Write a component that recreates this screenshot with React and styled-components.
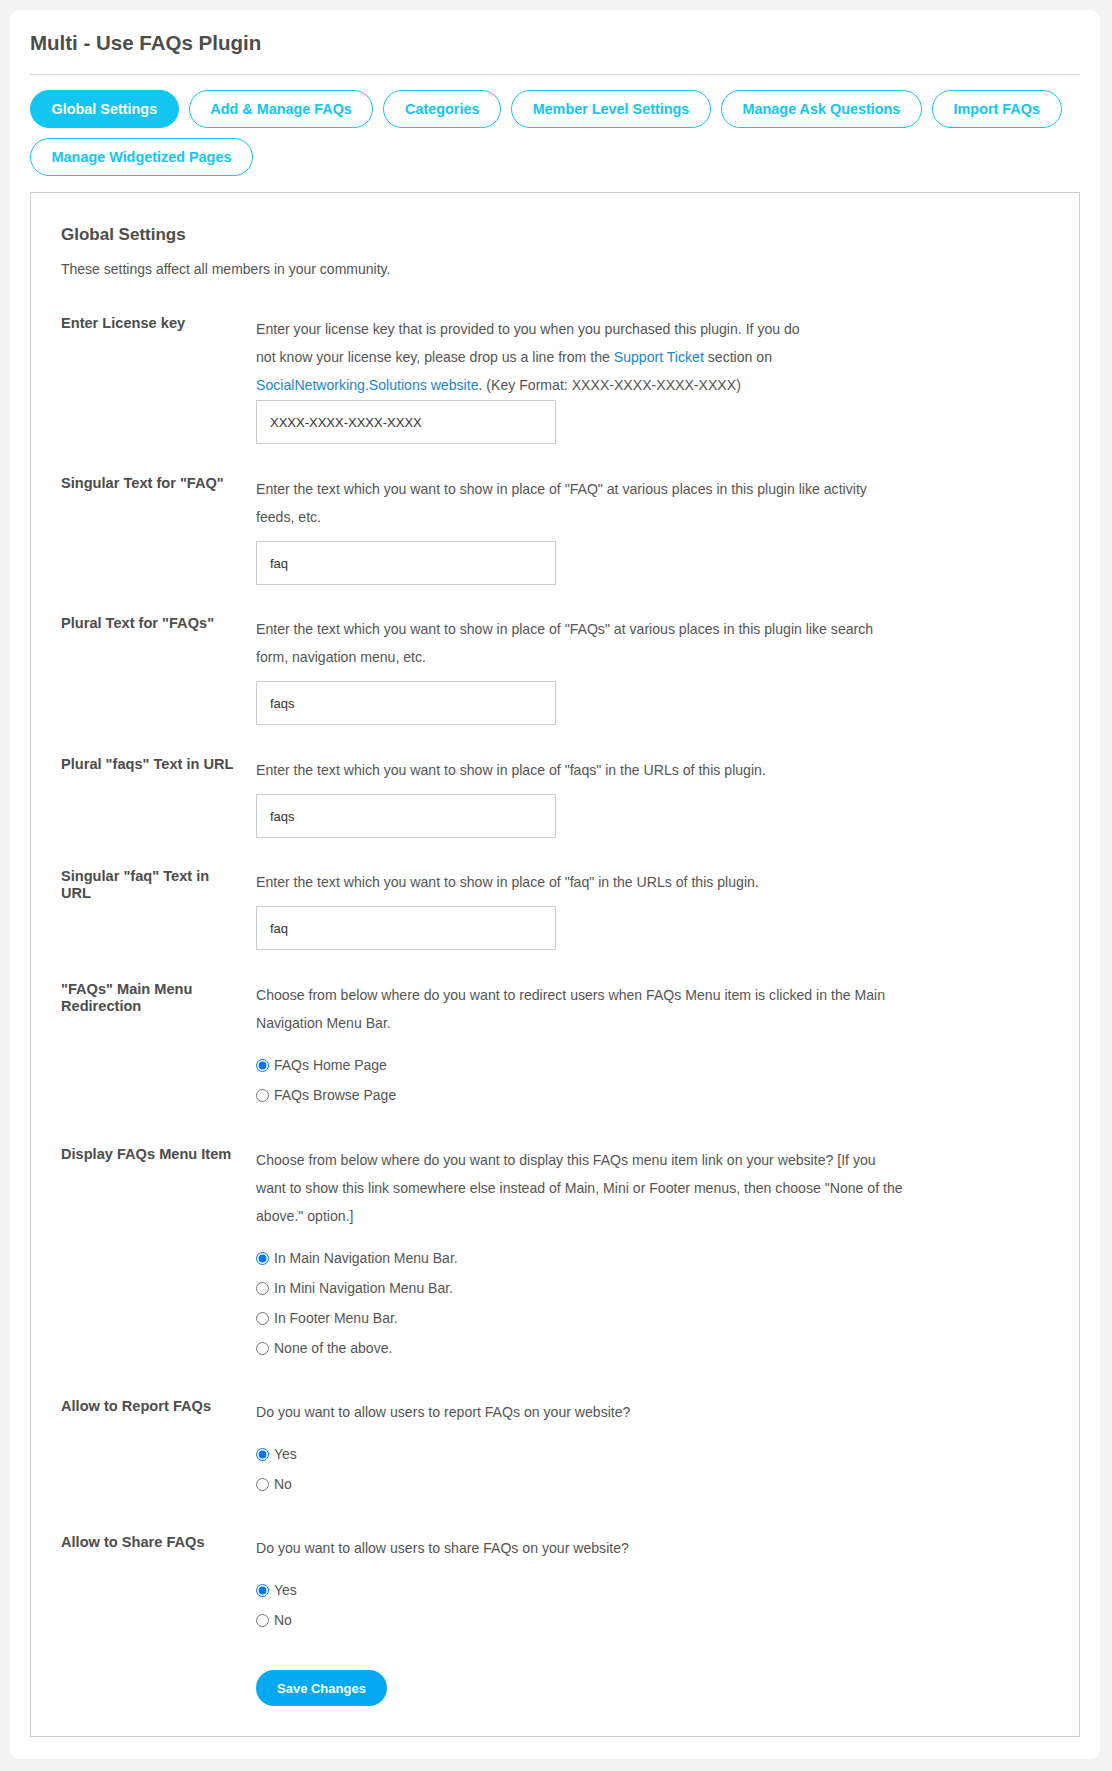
import React from 'react';
import styled, { createGlobalStyle } from 'styled-components';

const GlobalStyle = createGlobalStyle`
  body {
    margin: 0;
    background: #f4f4f4;
    font-family: "Liberation Sans", Arial, sans-serif;
    color: #555;
  }
`;

const tabs = [
  'Global Settings',
  'Add & Manage FAQs',
  'Categories',
  'Member Level Settings',
  'Manage Ask Questions',
  'Import FAQs',
  'Manage Widgetized Pages',
];

const Card = styled.div`
  margin: 10px 12px 14px 10px;
  background: #fff;
  border-radius: 10px;
  padding: 21px 20px 22px 20px;
`;

const Title = styled.h1`
  margin: 0;
  padding: 0 0 19px 0;
  border-bottom: 1px solid #dcdcdc;
  font-size: 20.5px;
  line-height: 24px;
  font-weight: bold;
  color: #4d4d4d;
`;

const TabBar = styled.div`
  display: flex;
  flex-wrap: wrap;
  gap: 10px;
  margin-top: 15px;
`;

const Tab = styled.a`
  display: flex;
  align-items: center;
  height: 38px;
  box-sizing: border-box;
  padding: 0 20.6px;
  border: 1px solid #13c6f0;
  border-radius: 20px;
  font-size: 14.4px;
  font-weight: bold;
  text-decoration: none;
  cursor: pointer;
  color: ${(p) => (p.$active ? '#fff' : '#13c6f0')};
  background: ${(p) => (p.$active ? '#13c6f0' : '#fff')};
`;

const Panel = styled.div`
  margin-top: 16px;
  border: 1px solid #cfcfcf;
  padding: 32px 30px 30px 30px;
`;

const PanelTitle = styled.h3`
  margin: 0;
  font-size: 17px;
  line-height: 20px;
  font-weight: bold;
  color: #4d4d4d;
`;

const PanelIntro = styled.p`
  margin: 14px 0 36px 0;
  font-size: 14px;
  line-height: 20px;
`;

const Row = styled.div`
  display: grid;
  grid-template-columns: 180px 1fr;
  column-gap: 15px;
  margin-bottom: ${(p) => p.$gap ?? 30}px;
`;

const Label = styled.label`
  font-size: 14.6px;
  line-height: 17px;
  font-weight: bold;
  color: #4d4d4d;
`;

const Field = styled.div`
  display: flex;
  flex-direction: column;
  align-items: flex-start;
`;

const Desc = styled.p`
  margin: 0;
  font-size: 14.1px;
  line-height: 28px;
  color: #555;
  white-space: nowrap;
`;

const Link = styled.a`
  color: #1a87cf;
  text-decoration: none;
`;

const TextInput = styled.input`
  box-sizing: border-box;
  width: 300px;
  height: 44px;
  margin-top: ${(p) => p.$top ?? 10}px;
  padding: 0 13px;
  border: 1px solid #cccccc;
  font-family: "Liberation Sans", Arial, sans-serif;
  font-size: 13px;
  color: #333;
  outline: none;
`;

const RadioList = styled.div`
  margin-top: 13px;
  display: flex;
  flex-direction: column;
`;

const RadioLine = styled.label`
  display: flex;
  align-items: center;
  height: 30px;
  font-size: 14px;
  color: #555;
  input {
    margin: 0 5px 0 0;
    width: 13px;
    height: 13px;
  }
`;

const SaveButton = styled.button`
  margin-top: 35px;
  height: 36px;
  padding: 0 21px;
  border: none;
  border-radius: 18px;
  background: #06a9f1;
  color: #fff;
  font-family: "Liberation Sans", Arial, sans-serif;
  font-size: 13px;
  font-weight: bold;
  cursor: pointer;
`;

const Radios = ({ name, options, checked }) => (
  <RadioList>
    {options.map((o, i) => (
      <RadioLine key={o}>
        <input type="radio" name={name} defaultChecked={i === checked} />
        {o}
      </RadioLine>
    ))}
  </RadioList>
);

const App = () => {
  return (
    <>
      <GlobalStyle />
      <Card>
        <Title>Multi - Use FAQs Plugin</Title>
        <TabBar>
          {tabs.map((t, i) => (
            <Tab key={t} $active={i === 0}>
              {t}
            </Tab>
          ))}
        </TabBar>

        <Panel>
          <PanelTitle>Global Settings</PanelTitle>
          <PanelIntro>These settings affect all members in your community.</PanelIntro>

          <Row $gap={31}>
            <Label>Enter License key</Label>
            <Field>
              <Desc>
                Enter your license key that is provided to you when you purchased this plugin. If you do
                <br />
                not know your license key, please drop us a line from the <Link>Support Ticket</Link> section on
                <br />
                <Link>SocialNetworking.Solutions website</Link>. (Key Format: XXXX-XXXX-XXXX-XXXX)
              </Desc>
              <TextInput $top={1} defaultValue="XXXX-XXXX-XXXX-XXXX" />
            </Field>
          </Row>

          <Row>
            <Label>Singular Text for "FAQ"</Label>
            <Field>
              <Desc>
                Enter the text which you want to show in place of "FAQ" at various places in this plugin like activity
                <br />
                feeds, etc.
              </Desc>
              <TextInput defaultValue="faq" />
            </Field>
          </Row>

          <Row $gap={31}>
            <Label>Plural Text for "FAQs"</Label>
            <Field>
              <Desc>
                Enter the text which you want to show in place of "FAQs" at various places in this plugin like search
                <br />
                form, navigation menu, etc.
              </Desc>
              <TextInput defaultValue="faqs" />
            </Field>
          </Row>

          <Row>
            <Label>Plural "faqs" Text in URL</Label>
            <Field>
              <Desc>Enter the text which you want to show in place of "faqs" in the URLs of this plugin.</Desc>
              <TextInput defaultValue="faqs" />
            </Field>
          </Row>

          <Row $gap={31}>
            <Label>
              Singular "faq" Text in
              <br />
              URL
            </Label>
            <Field>
              <Desc>Enter the text which you want to show in place of "faq" in the URLs of this plugin.</Desc>
              <TextInput defaultValue="faq" />
            </Field>
          </Row>

          <Row $gap={36}>
            <Label>
              "FAQs" Main Menu
              <br />
              Redirection
            </Label>
            <Field>
              <Desc>
                Choose from below where do you want to redirect users when FAQs Menu item is clicked in the Main
                <br />
                Navigation Menu Bar.
              </Desc>
              <Radios name="redirect" checked={0} options={['FAQs Home Page', 'FAQs Browse Page']} />
            </Field>
          </Row>

          <Row $gap={35}>
            <Label>Display FAQs Menu Item</Label>
            <Field>
              <Desc>
                Choose from below where do you want to display this FAQs menu item link on your website? [If you
                <br />
                want to show this link somewhere else instead of Main, Mini or Footer menus, then choose "None of the
                <br />
                above." option.]
              </Desc>
              <Radios
                name="menu"
                checked={0}
                options={[
                  'In Main Navigation Menu Bar.',
                  'In Mini Navigation Menu Bar.',
                  'In Footer Menu Bar.',
                  'None of the above.',
                ]}
              />
            </Field>
          </Row>

          <Row $gap={35}>
            <Label>Allow to Report FAQs</Label>
            <Field>
              <Desc>Do you want to allow users to report FAQs on your website?</Desc>
              <Radios name="report" checked={0} options={['Yes', 'No']} />
            </Field>
          </Row>

          <Row $gap={0}>
            <Label>Allow to Share FAQs</Label>
            <Field>
              <Desc>Do you want to allow users to share FAQs on your website?</Desc>
              <Radios name="share" checked={0} options={['Yes', 'No']} />
              <SaveButton>Save Changes</SaveButton>
            </Field>
          </Row>
        </Panel>
      </Card>
    </>
  );
};

export default App;
